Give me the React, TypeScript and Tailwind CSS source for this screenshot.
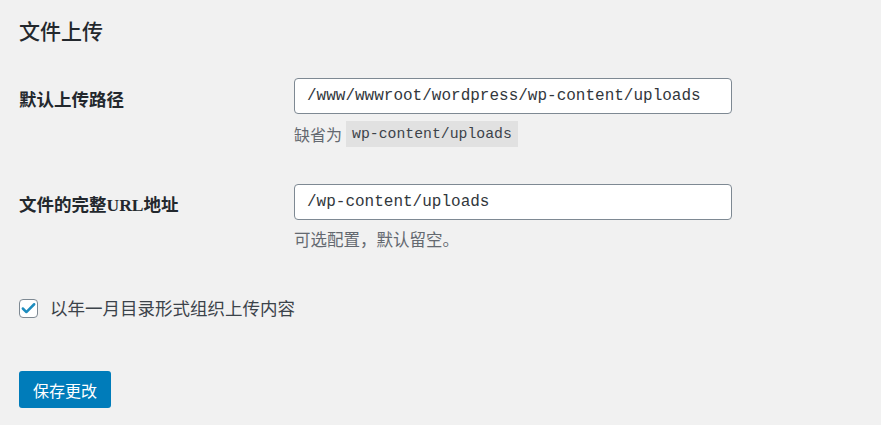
import { Check } from "lucide-react";

const sans = "font-['Noto_Sans_CJK_SC','Noto_Sans',sans-serif]";
const serif = "font-['Liberation_Serif','Noto_Sans_CJK_SC',serif]";
const mono = "font-['Liberation_Mono','Noto_Sans_CJK_SC',monospace]";

export default function App() {
  return (
    <div className={`min-h-[425px] w-[881px] bg-[#f1f1f1] pl-[19px] pt-[15px] text-[#23282d] ${sans}`}>
      <h2 className="text-[21px] font-medium leading-[30px]">文件上传</h2>

      <div className="mt-[33px]">
        {/* upload path */}
        <div className="flex">
          <div className={`w-[275px] pt-[10px] text-[17.5px] font-bold leading-[24px] ${serif}`}>
            默认上传路径
          </div>
          <div>
            <input
              readOnly
              defaultValue="/www/wwwroot/wordpress/wp-content/uploads"
              className={`block h-[36px] w-[438px] rounded-[4px] border border-[#7e8993] bg-white px-[12px] text-[16px] text-[#32373c] outline-none ${mono}`}
            />
            <p className="mt-[7px] flex h-[26px] items-center text-[16px] text-[#646970]">
              缺省为
              <code className={`ml-[4px] inline-flex h-[26px] items-center bg-[#e1e1e1] px-[6px] text-[14.8px] text-[#3c434a] ${mono}`}>
                wp-content/uploads
              </code>
            </p>
          </div>
        </div>

        {/* full URL */}
        <div className="mt-[37px] flex">
          <div className={`w-[275px] pt-[9px] text-[17.5px] font-bold leading-[24px] ${serif}`}>
            文件的完整URL地址
          </div>
          <div>
            <input
              readOnly
              defaultValue="/wp-content/uploads"
              className={`block h-[36px] w-[438px] rounded-[4px] border border-[#7e8993] bg-white px-[12px] text-[16px] text-[#32373c] outline-none ${mono}`}
            />
            <p className="mt-[7px] text-[16.5px] leading-[24px] text-[#646970]">可选配置，默认留空。</p>
          </div>
        </div>

        <label className="mt-[45px] flex h-[24px] items-center gap-[12px]">
          <span className="flex h-[19px] w-[19px] items-center justify-center rounded-[4px] border border-[#7e8993] bg-white">
            <Check size={17} strokeWidth={3.5} className="text-[#1e8cbe]" />
          </span>
          <span className="text-[17.5px] leading-[24px] text-[#3c434a]">以年一月目录形式组织上传内容</span>
        </label>

        <button className="mt-[51px] h-[37px] w-[92px] rounded-[3px] bg-[#007cba] text-[16px] text-white">
          保存更改
        </button>
      </div>
    </div>
  );
}
